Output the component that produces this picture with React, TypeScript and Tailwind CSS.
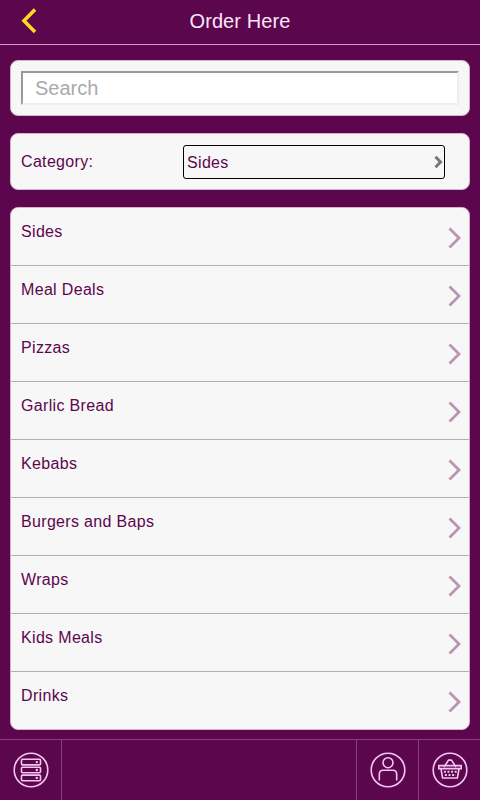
const categories = [
  "Sides",
  "Meal Deals",
  "Pizzas",
  "Garlic Bread",
  "Kebabs",
  "Burgers and Baps",
  "Wraps",
  "Kids Meals",
  "Drinks",
];

const MenuIcon = () => (
  <svg width="36" height="36" viewBox="0 0 36 36" fill="none" stroke="#f3c6f0" strokeWidth="1.6">
    <circle cx="18" cy="18" r="16.8" />
    {[7.3, 15.2, 23.1].map((y) => (
      <g key={y}>
        <rect x="8.5" y={y} width="19" height="5.6" rx="1" />
        <circle cx="23.8" cy={y + 2.8} r="1.2" fill="#f3c6f0" stroke="none" />
      </g>
    ))}
  </svg>
);

const AccountIcon = () => (
  <svg width="36" height="36" viewBox="0 0 36 36" fill="none" stroke="#f3c6f0" strokeWidth="1.6">
    <circle cx="18" cy="18" r="16.8" />
    <circle cx="18" cy="10.7" r="5" />
    <path d="M9.3 28.5v-6.2c0-2.6 1.5-4 4-4h9.4c2.5 0 4 1.4 4 4v6.2" />
  </svg>
);

const BasketIcon = () => (
  <svg width="36" height="36" viewBox="0 0 36 36" fill="none" stroke="#f3c6f0" strokeWidth="1.6">
    <circle cx="18" cy="18" r="16.8" />
    <path d="M6.8 13.6h22.4v3H6.8zM9 17l1.6 9h14.8L27 17M12 15l4.6-6.9h2.8L24 15" />
    <path d="M11.9 19.8h13M12.9 23.1h11" strokeWidth="2" strokeDasharray="2 1.6" />
  </svg>
);

const App = () => {
  return (
    <div className="flex h-[800px] w-[480px] flex-col overflow-hidden bg-[#5c064e] font-['Liberation_Sans',Arial,sans-serif] text-base tracking-[0.33px] text-[#5c064e]">
      <header className="grid h-[45px] shrink-0 grid-cols-[60px_1fr_60px] items-center border-b border-[#d795cf] pb-0.5">
        <button className="pl-5" aria-label="Back">
          <svg width="18" height="26" viewBox="0 0 18 26" fill="none" stroke="#ffd91f" strokeWidth="3.6">
            <path d="M15 1.5L4 12.8L15 24" />
          </svg>
        </button>
        <h1 className="text-center text-xl leading-6 tracking-[0.1px] text-[#fbe6fa]">Order Here</h1>
      </header>

      <main className="flex flex-1 flex-col gap-[17px] px-2.5 pt-[15px]">
        <div className="h-14 rounded-lg border border-[#cfb5cb] bg-[#f7f7f7] p-2.5">
          <input
            type="text"
            placeholder="Search"
            className="h-[34px] w-full border-2 border-t-[#999] border-r-[#eee] border-b-[#eee] border-l-[#999] bg-white px-3 text-xl tracking-normal placeholder:text-[#aaa] outline-none"
          />
        </div>

        <div className="flex h-[57px] items-center rounded-lg border border-[#cfb5cb] bg-[#f7f7f7] pl-2.5">
          <span className="w-[162px]">Category:</span>
          <button className="flex h-[34px] w-[262px] items-center justify-between rounded-[3px] border border-black pr-px pl-[3px] tracking-[0.33px]">
            <span className="pt-0.5">Sides</span>
            <svg width="9" height="14" viewBox="0 0 9 14" fill="none" stroke="#777" strokeWidth="3">
              <path d="M1.5 1.8L6.5 7L1.5 12.2" />
            </svg>
          </button>
        </div>

        <ul className="h-[523px] rounded-lg border border-[#cfb5cb] bg-[#f7f7f7]">
          {categories.map((category) => (
            <li
              key={category}
              className="flex h-[58px] justify-between border-b border-[#b3b0b3] pt-3 pr-2 pl-2.5 last:h-[57px] last:border-b-0"
            >
              <span>{category}</span>
              <svg className="mt-[7px]" width="13" height="22" viewBox="0 0 13 22" fill="none" stroke="#b795b3" strokeWidth="2.8">
                <path d="M1.5 1.5L11 11L1.5 20.5" />
              </svg>
            </li>
          ))}
        </ul>
      </main>

      <footer className="flex h-[61px] shrink-0 justify-between border-t border-[#87417c]">
        <div className="flex w-[62px] items-center justify-center border-r border-[#87417c]">
          <MenuIcon />
        </div>
        <div className="flex">
          <div className="flex w-[62px] items-center justify-center border-l border-[#87417c]">
            <AccountIcon />
          </div>
          <div className="flex w-[62px] items-center justify-center border-l border-[#87417c]">
            <BasketIcon />
          </div>
        </div>
      </footer>
    </div>
  );
};

export default App;
